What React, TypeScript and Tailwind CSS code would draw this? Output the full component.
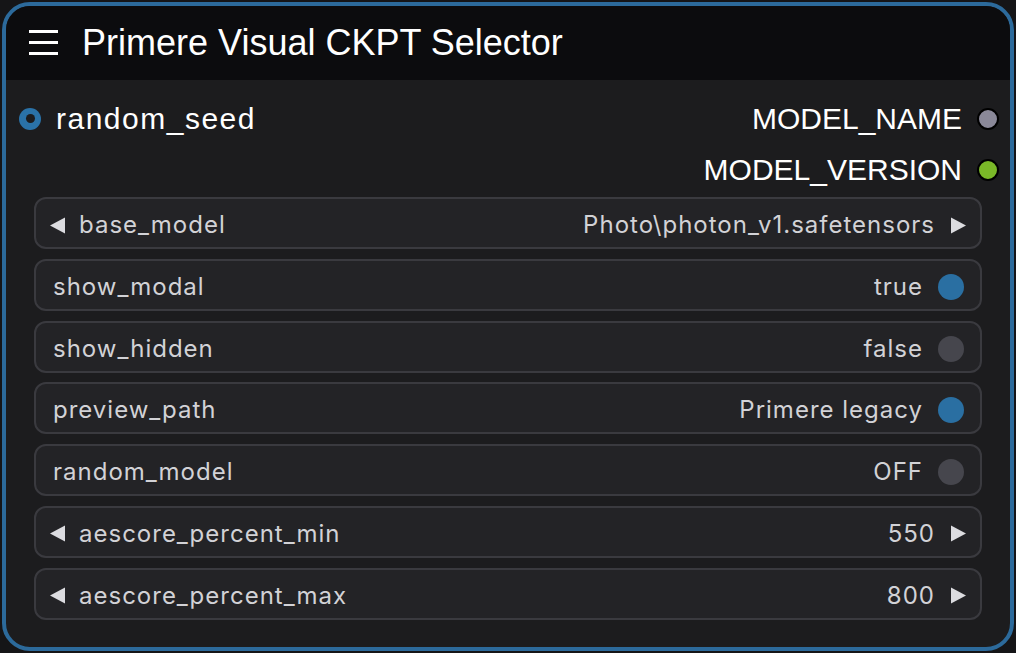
import React from 'react';

type Widget =
  | { kind: 'combo'; label: string; value: string }
  | { kind: 'toggle'; label: string; value: string; on: boolean };

const widgets: Widget[] = [
  { kind: 'combo', label: 'base_model', value: 'Photo\\photon_v1.safetensors' },
  { kind: 'toggle', label: 'show_modal', value: 'true', on: true },
  { kind: 'toggle', label: 'show_hidden', value: 'false', on: false },
  { kind: 'toggle', label: 'preview_path', value: 'Primere legacy', on: true },
  { kind: 'toggle', label: 'random_model', value: 'OFF', on: false },
  { kind: 'combo', label: 'aescore_percent_min', value: '550' },
  { kind: 'combo', label: 'aescore_percent_max', value: '800' },
];

const Arrow = ({ dir }: { dir: 'left' | 'right' }) => (
  <svg width="16" height="17" viewBox="0 0 16 17" className="shrink-0">
    {dir === 'left' ? <path d="M0 8.5 L15 0.5 L15 16.5 Z" fill="#dcdce0" /> : <path d="M16 8.5 L1 0.5 L1 16.5 Z" fill="#dcdce0" />}
  </svg>
);

const WidgetRow = ({ w }: { w: Widget }) => {
  if (w.kind === 'combo') {
    return (
      <div className="h-[52px] rounded-[12px] border-2 border-[#3a3a3f] bg-[#232326] flex items-center pt-[4px] pl-[14px] pr-[14px]">
        <Arrow dir="left" />
        <span className="ml-[13px] flex-1 text-[#d2d2d6]">{w.label}</span>
        <span className="text-[#d2d2d6]">{w.value}</span>
        <span className="ml-[15px]"><Arrow dir="right" /></span>
      </div>
    );
  }
  return (
    <div className="h-[52px] rounded-[12px] border-2 border-[#3a3a3f] bg-[#232326] flex items-center pt-[4px] pl-[17px] pr-[16px]">
      <span className="flex-1 text-[#d2d2d6]">{w.label}</span>
      <span className="text-[#d2d2d6]">{w.value}</span>
      <span className={`ml-[15px] w-[26px] h-[26px] rounded-full ${w.on ? 'bg-[#2a6fa2]' : 'bg-[#46464d]'}`} />
    </div>
  );
};

export default function App() {
  return (
    <div className="w-[1016px] h-[653px] bg-[#151517] p-[2px]">
      <div className="h-full rounded-[28px] border-4 border-[#2c6a9b] bg-[#1c1c1e] overflow-hidden flex flex-col">
        {/* Title bar */}
        <div className="h-[74px] shrink-0 bg-[#0c0c0e] flex items-center pl-[23px]">
          <div className="flex flex-col gap-[8px] w-[29px] -mt-[2px]">
            <span className="h-[3px] bg-white" />
            <span className="h-[3px] bg-white" />
            <span className="h-[3px] bg-white" />
          </div>
          <span className="ml-[24px] -mt-[1px] text-white text-[36px] leading-none font-['Liberation_Sans',Arial,sans-serif]">
            Primere Visual CKPT Selector
          </span>
        </div>

        {/* Body */}
        <div className="flex flex-col pt-[13px]">
          <div className="h-[51px] flex items-center justify-between pl-[13px] pr-[11px] font-['Liberation_Sans',Arial,sans-serif] text-[30px] text-white">
            <div className="flex items-center">
              <span className="w-[22px] h-[22px] rounded-full bg-[#2a72a8] flex items-center justify-center">
                <span className="w-[9px] h-[9px] rounded-full bg-[#1c1c1e]" />
              </span>
              <span className="ml-[15px] tracking-[1.5px]">random_seed</span>
            </div>
            <div className="flex items-center">
              <span>MODEL_NAME</span>
              <span className="ml-[15px] w-[22px] h-[22px] rounded-full bg-[#8a8898] border-2 border-black" />
            </div>
          </div>
          <div className="h-[51px] flex items-center justify-end pr-[11px] font-['Liberation_Sans',Arial,sans-serif] text-[30px] text-white">
            <span>MODEL_VERSION</span>
            <span className="ml-[15px] w-[22px] h-[22px] rounded-full bg-[#7ab828] border-2 border-black" />
          </div>

          <div className="mt-[2px] px-[28px] flex flex-col gap-[9.8px] font-['Inter',sans-serif] text-[24px] tracking-[1px]">
            {widgets.map((w) => (
              <WidgetRow key={w.label} w={w} />
            ))}
          </div>
        </div>
      </div>
    </div>
  );
}
